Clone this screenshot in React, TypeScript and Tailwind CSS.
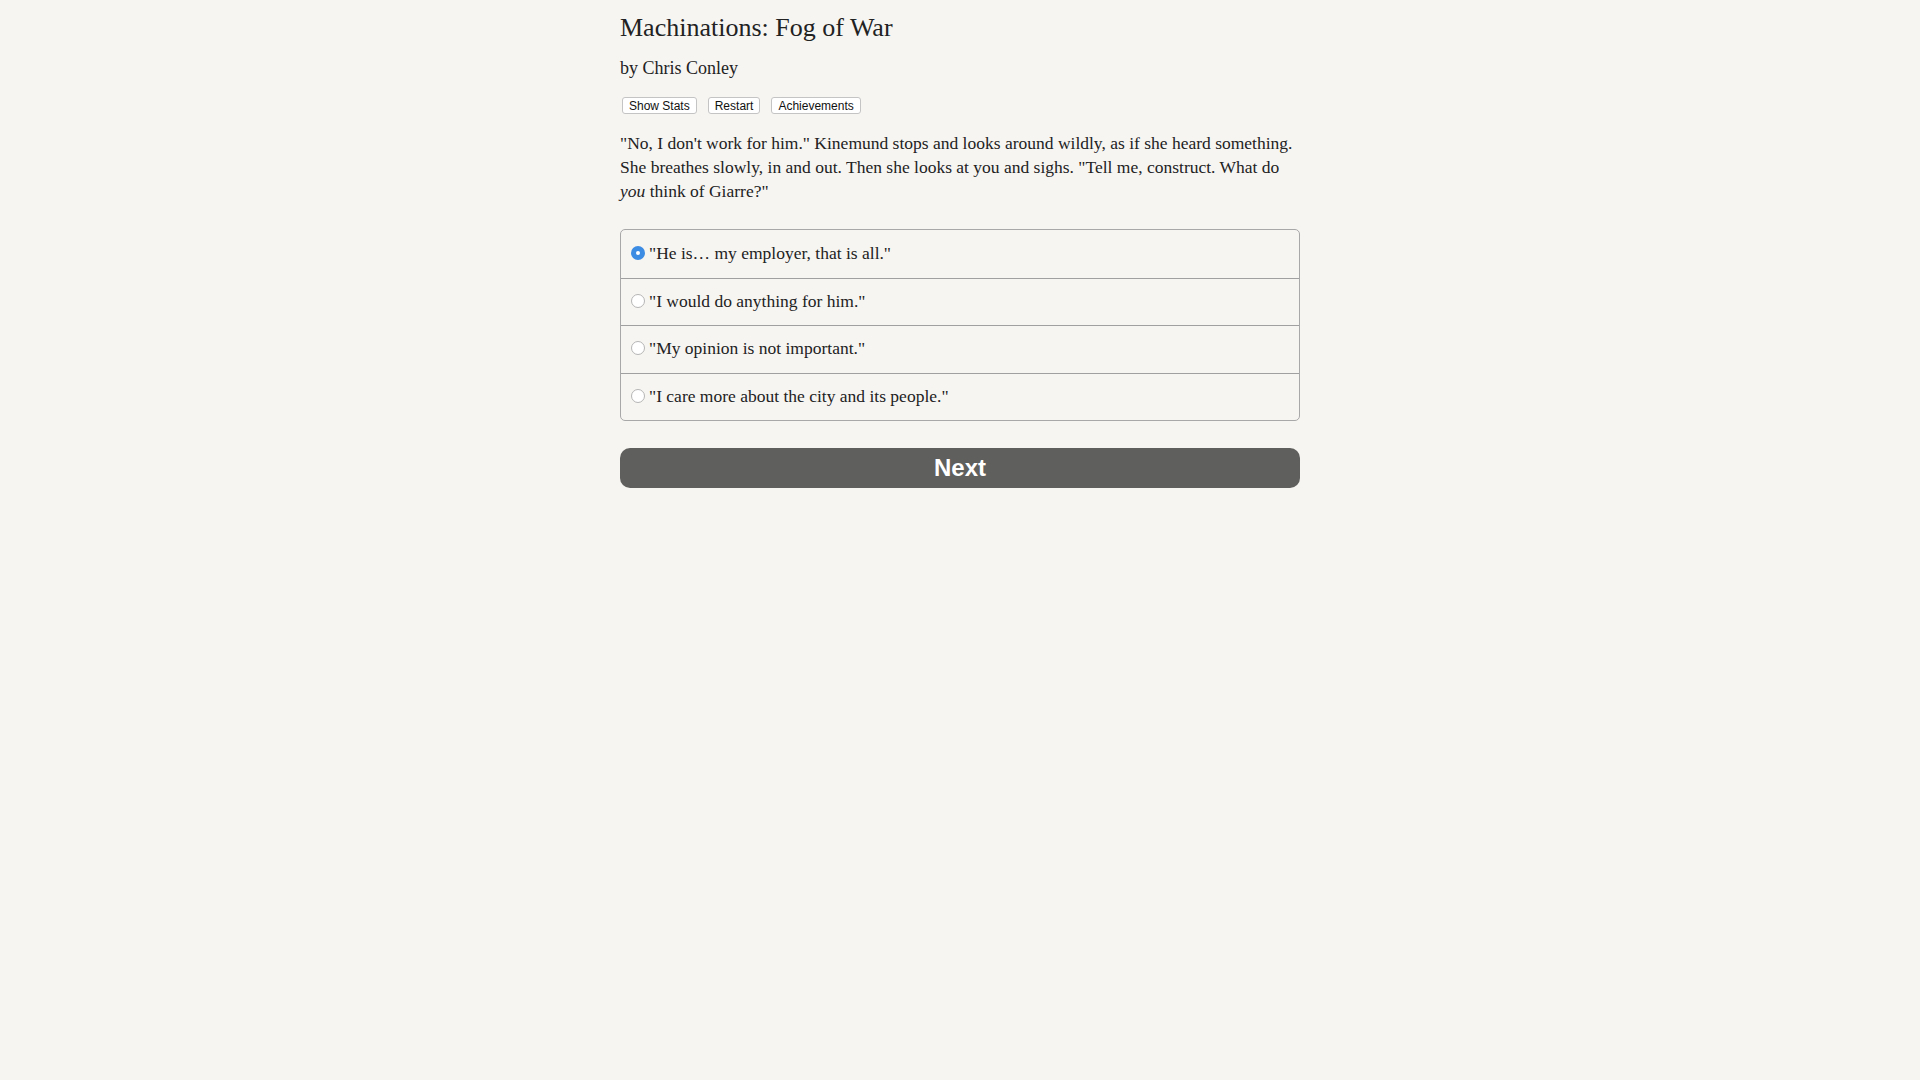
import { useState } from 'react';

const options = [
  '"He is… my employer, that is all."',
  '"I would do anything for him."',
  '"My opinion is not important."',
  '"I care more about the city and its people."',
];

const App = () => {
  const [selected, setSelected] = useState(0);

  return (
    <div className="min-h-screen bg-[#f7f5f2] text-[#222222] font-['Liberation_Serif',serif]">
      <div className="w-[680px] mx-auto pt-[13px]">
        <h1 className="text-[26px] leading-[30px] font-normal">Machinations: Fog of War</h1>
        <h2 className="mt-[14px] text-[18px] leading-[22px] font-normal">by Chris Conley</h2>

        {/* Botones de la partida */}
        <div className="mt-[18px] flex gap-[11px] pl-[2px] font-['Liberation_Sans',sans-serif]">
          <button className="h-[17px] px-[6px] text-[12px] leading-none bg-white border border-[#c4c4c4] rounded-[3px] text-[#111]">
            Show Stats
          </button>
          <button className="h-[17px] px-[6px] text-[12px] leading-none bg-white border border-[#c4c4c4] rounded-[3px] text-[#111]">
            Restart
          </button>
          <button className="h-[17px] px-[6px] text-[12px] leading-none bg-white border border-[#c4c4c4] rounded-[3px] text-[#111]">
            Achievements
          </button>
        </div>

        <p className="mt-[17px] text-[17.5px] leading-[24px]">
          "No, I don't work for him." Kinemund stops and looks around wildly, as if she heard something. She breathes
          slowly, in and out. Then she looks at you and sighs. "Tell me, construct. What do <i>you</i> think of Giarre?"
        </p>

        {/* Opciones */}
        <div className="mt-[26px] border border-[#a8a8a8] rounded-[5px] overflow-hidden">
          {options.map((opt, i) => (
            <label
              key={i}
              onClick={() => setSelected(i)}
              className={`flex items-center h-[47.5px] pl-[10px] pb-[2px] cursor-pointer ${i > 0 ? 'border-t border-[#a0a0a0]' : ''}`}
            >
              {selected === i ? (
                <span className="w-[14px] h-[14px] rounded-full bg-[#3d8ce3] flex items-center justify-center">
                  <span className="w-[4px] h-[4px] rounded-full bg-white" />
                </span>
              ) : (
                <span className="w-[14px] h-[14px] rounded-full bg-white border border-[#b5b5b5]" />
              )}
              <span className="ml-[4px] text-[17.5px]">{opt}</span>
            </label>
          ))}
        </div>

        <button className="mt-[27px] w-full h-[40px] rounded-[10px] bg-[#5f5f5d] text-white text-[24px] font-bold font-['Liberation_Sans',sans-serif]">
          Next
        </button>
      </div>
    </div>
  );
};

export default App;
